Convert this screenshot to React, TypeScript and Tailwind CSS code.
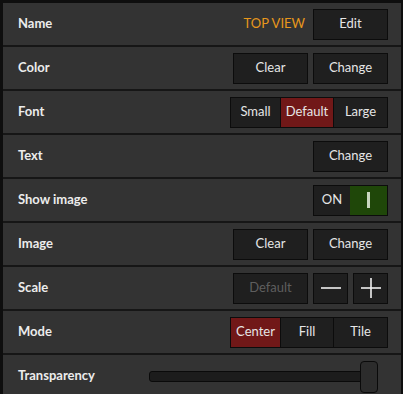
import React from "react";

const font = { fontFamily: 'Lato, "Noto Sans", Arial, sans-serif' };

function Btn({ children, w = "w-[75px]", disabled = false }: { children: React.ReactNode; w?: string; disabled?: boolean }) {
  return (
    <div
      className={`${w} h-[31px] flex items-center justify-center border border-[#0c0c0c] bg-[#1f1f1f] text-[13px] ${
        disabled ? "text-[#5e5e5e]" : "text-[#e6e6e6]"
      }`}
    >
      {children}
    </div>
  );
}

function Seg({ items, active }: { items: string[]; active: number }) {
  const widths = ["w-[49px]", "w-[52px]", "w-[53px]"];
  return (
    <div className="flex h-[31px] border border-[#0c0c0c] bg-[#0c0c0c] gap-[1px]">
      {items.map((t, i) => (
        <div
          key={t}
          className={`${widths[i]} flex items-center justify-center text-[13px] text-[#e6e6e6] ${
            i === active ? "bg-[#711818]" : "bg-[#1f1f1f]"
          }`}
        >
          {t}
        </div>
      ))}
    </div>
  );
}

function Row({ label, children }: { label: string; children?: React.ReactNode }) {
  return (
    <div className="h-[42px] flex items-center bg-[#333333] pl-[15px] pr-[13px]">
      <div className="flex-1 text-[13px] font-bold text-[#ececec]">{label}</div>
      <div className="flex items-center gap-[5px]">{children}</div>
    </div>
  );
}

export default function App() {
  return (
    <div className="w-[403px] h-[394px] overflow-hidden bg-[#0e0e0e] pt-[3px] pl-[3px] pr-[2px]" style={font}>
      <div className="flex flex-col gap-[2px] bg-[#161616]">
        <Row label="Name">
          <span className="text-[13px] text-[#e8971c] mr-[3px]">TOP VIEW</span>
          <Btn>Edit</Btn>
        </Row>
        <Row label="Color">
          <Btn>Clear</Btn>
          <Btn>Change</Btn>
        </Row>
        <Row label="Font">
          <Seg items={["Small", "Default", "Large"]} active={1} />
        </Row>
        <Row label="Text">
          <Btn>Change</Btn>
        </Row>
        <Row label="Show image">
          <div className="flex h-[31px] w-[75px] border border-[#0c0c0c] bg-[#0c0c0c]">
            <div className="w-[36px] bg-[#1f1f1f] flex items-center justify-center text-[13px] text-[#e6e6e6]">ON</div>
            <div className="flex-1 bg-[#1f4709] flex items-center justify-center">
              <div className="w-[3px] h-[16px] bg-[#c9d6c0]" />
            </div>
          </div>
        </Row>
        <Row label="Image">
          <Btn>Clear</Btn>
          <Btn>Change</Btn>
        </Row>
        <Row label="Scale">
          <Btn disabled>Default</Btn>
          <Btn w="w-[35px]">
            <svg width="20" height="20" viewBox="0 0 20 20">
              <line x1="0" y1="10" x2="20" y2="10" stroke="#f0f0f0" strokeWidth="1.6" />
            </svg>
          </Btn>
          <Btn w="w-[35px]">
            <svg width="20" height="20" viewBox="0 0 20 20">
              <line x1="0" y1="10" x2="20" y2="10" stroke="#f0f0f0" strokeWidth="1.6" />
              <line x1="10" y1="0" x2="10" y2="20" stroke="#f0f0f0" strokeWidth="1.6" />
            </svg>
          </Btn>
        </Row>
        <Row label="Mode">
          <Seg items={["Center", "Fill", "Tile"]} active={0} />
        </Row>
        <div className="h-[42px] flex items-center bg-[#333333] pl-[15px] pr-[13px]">
          <div className="w-[131px] text-[13px] font-bold text-[#ececec]">Transparency</div>
          <div className="relative w-[228px] h-[11px] rounded-[3px] border border-[#0a0a0a] bg-[#1c1c1c]">
            <div className="absolute right-[-2px] top-[-11px] w-[18px] h-[32px] rounded-[4px] border border-[#0a0a0a] bg-[#2c2c2c]" />
          </div>
        </div>
      </div>
    </div>
  );
}
